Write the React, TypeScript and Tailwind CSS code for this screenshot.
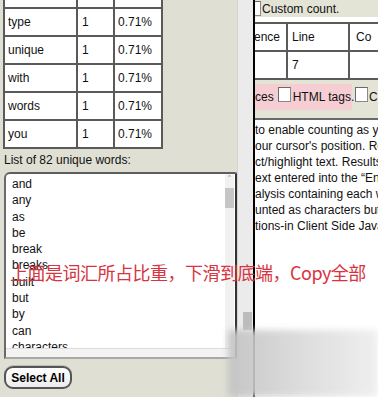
import React from "react";

const rows = [
  { word: "", count: "", pct: "" },
  { word: "type", count: "1", pct: "0.71%" },
  { word: "unique", count: "1", pct: "0.71%" },
  { word: "with", count: "1", pct: "0.71%" },
  { word: "words", count: "1", pct: "0.71%" },
  { word: "you", count: "1", pct: "0.71%" },
];

const words = [
  "and",
  "any",
  "as",
  "be",
  "break",
  "breaks",
  "built",
  "but",
  "by",
  "can",
  "characters",
  "count",
];

const lines = [
  "to enable counting as you type",
  "our cursor's position. Results",
  "ct/highlight text. Results",
  "ext entered into the \u201cEnter",
  "alysis containing each word",
  "unted as characters but",
  "tions-in Client Side Javascript",
];

function Box() {
  return (
    <span className="inline-block w-[13px] h-[15px] shrink-0 bg-white border border-[#8a8a8a] border-t-[#6a6a6a] border-l-[#6a6a6a]" />
  );
}

export default function App() {
  return (
    <div className="relative w-[378px] h-[397px] overflow-hidden flex font-['Liberation_Sans',Arial,sans-serif] text-[12px] text-[#111]">
      {/* word statistics */}
      <div className="w-[237px] shrink-0 bg-[#dfdfd4] flex flex-col pl-[3px]">
        <div className="-mt-[19px] w-[160px] bg-white border-l-2 border-r-2 border-[#5a5a5a]">
          {rows.map((r, i) => (
            <div key={i} className="flex h-[28px] border-b-2 border-[#5a5a5a]">
              <div className="w-[73px] border-r-2 border-[#5a5a5a] flex items-center pl-[3px]">{r.word}</div>
              <div className="w-[37px] border-r-2 border-[#5a5a5a] flex items-center pl-[4px]">{r.count}</div>
              <div className="w-[46px] flex items-center pl-[3px]">{r.pct}</div>
            </div>
          ))}
        </div>
        <div className="mt-[4px] leading-[14px] pl-[1px]">List of 82 unique words:</div>

        <div className="mt-[5px] ml-[1px] w-[233px] h-[187px] flex flex-col bg-white rounded-tl-[6px] rounded-tr-[2px] border-2 border-t-[#5e5e5e] border-l-[#6a6a6a] border-r-[#333] border-b-[#a8a8a8] overflow-hidden">
          <div className="flex flex-1 min-h-0">
            <div className="flex-1 pl-[6px] pt-[2px] leading-[16.3px] overflow-hidden">
              {words.map((w) => (
                <div key={w}>{w}</div>
              ))}
            </div>
            <div className="w-[9px] mr-[1px] bg-[#f1f1f1] flex flex-col">
              <div className="h-[6px] text-[6px] leading-[6px] text-[#777] text-center">^</div>
              <div className="mt-[8px] h-[20px] bg-[#c6c6c6]" />
            </div>
          </div>
          <div className="h-[9px] shrink-0 bg-[#f3f3f3] border-t border-[#dcdcdc]" />
        </div>

        <button className="mt-[7px] ml-[1px] w-[68px] h-[23px] rounded-[9px] border-2 border-[#555] bg-gradient-to-b from-white to-[#ececec] font-bold text-[12px] text-black shadow-[0_-1px_0_#bbb]">
          Select All
        </button>
      </div>

      {/* page scrollbar */}
      <div className="w-[16px] shrink-0 bg-[#ebebeb] border-l border-[#d4d4d4] flex flex-col items-end pr-[1px]">
        <div className="mt-[312px] w-[9px] h-[18px] bg-[#bcbcbc]" />
      </div>

      {/* right document */}
      <div className="w-[125px] shrink-0 border-l-2 border-black bg-white overflow-hidden whitespace-nowrap flex flex-col">
        <div className="h-[17px] bg-[#e4e4d6] flex items-center -ml-[7px] gap-[1px]">
          <Box />
          <span>Custom count.</span>
        </div>

        <div className="mt-[5px] border-t-2 border-[#5a5a5a]">
          {[["ence", "Line", "Co"], ["", "7", ""]].map((r, i) => (
            <div key={i} className="flex h-[28px] border-b-2 border-[#5a5a5a]">
              <div className="w-[34px] shrink-0 border-r-2 border-[#5a5a5a] flex items-center -ml-[1px]">{r[0]}</div>
              <div className="w-[62px] shrink-0 border-r-2 border-[#5a5a5a] flex items-center pl-[4px]">{r[1]}</div>
              <div className="w-[60px] shrink-0 flex items-center pl-[6px]">{r[2]}</div>
            </div>
          ))}
        </div>

        <div className="h-[40px] bg-[#e4e4d6] border-b-2 border-[#6a6a6a] pt-[4px]">
          <div className="flex items-center h-[26px]">
            <div className="w-[97px] h-full bg-[#f5cdd3] flex items-center">
              <span>ces</span>
              <span className="ml-[4px]"><Box /></span>
              <span className="ml-[2px]">HTML tags.</span>
            </div>
            <span className="ml-[3px]"><Box /></span>
            <span className="ml-[1px]">C</span>
          </div>
        </div>

        <div className="pt-[2px] leading-[16px]">
          {lines.map((l) => (
            <div key={l}>{l}</div>
          ))}
        </div>
      </div>

      {/* blurred watermark */}
      <div className="absolute left-[228px] top-[330px] w-[150px] h-[67px] bg-gradient-to-r from-[#c2c2c2] via-[#dadada] to-[#eeeeee] blur-[3px] opacity-90" />

      {/* caption */}
      <div className="absolute left-[10px] top-[261px] text-[18px] tracking-[-0.5px] leading-[22px] whitespace-nowrap text-[#d7343f] font-['Noto_Sans_CJK_SC','Liberation_Sans',sans-serif]">
        上面是词汇所占比重，下滑到底端，Copy全部
      </div>
    </div>
  );
}
